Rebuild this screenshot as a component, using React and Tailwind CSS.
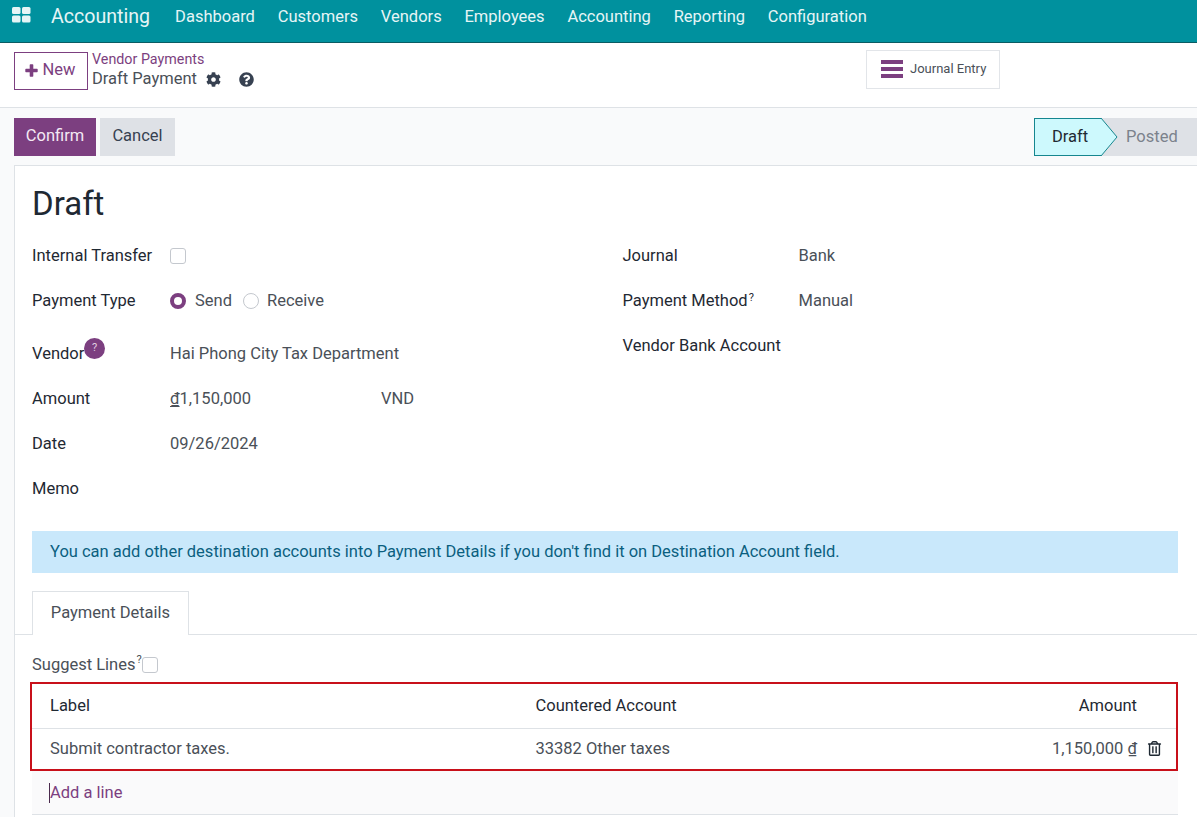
import { FaCog, FaQuestionCircle, FaRegTrashAlt } from 'react-icons/fa';

const navItems = ['Dashboard', 'Customers', 'Vendors', 'Employees', 'Accounting', 'Reporting', 'Configuration'];

const GridIcon = () => (
  <svg width="19" height="16" viewBox="0 0 19 16" className="shrink-0">
    <rect x="0" y="0" width="8.5" height="7" rx="1.5" fill="#e6f5f6" />
    <rect x="10" y="0" width="8.5" height="7" rx="1.5" fill="#e6f5f6" />
    <rect x="0" y="8.5" width="8.5" height="7" rx="1.5" fill="#e6f5f6" />
    <rect x="10" y="8.5" width="8.5" height="7" rx="1.5" fill="#e6f5f6" />
  </svg>
);

const Checkbox = () => <span className="block w-4 h-4 rounded-[3px] border border-[#c4c8ce] bg-white" />;

const Dong = () => <span className="underline underline-offset-2">₫</span>;

const FieldRow = ({ label, children, className = 'h-[45px]' }) => (
  <div className={`flex items-center ${className}`}>
    <div className="w-[138px] shrink-0 pt-[2px] text-[#1f2933] whitespace-nowrap">{label}</div>
    <div className="flex items-center pt-[2px] text-[#4a5058]">{children}</div>
  </div>
);

const RightRow = ({ label, children }) => (
  <div className="flex items-center h-[45px] pt-[2px]">
    <div className="w-[176px] shrink-0 text-[#1f2933] whitespace-nowrap">{label}</div>
    <div className="text-[#4a5058]">{children}</div>
  </div>
);

export default function App() {
  return (
    <div className="h-[817px] overflow-hidden bg-[#f9fafb] text-[16.5px] font-['Roboto',sans-serif]">
      {/* Top nav */}
      <div className="flex items-start h-[43px] bg-[#00919e] border-b border-[#0a5c63] text-[#e6f5f6]">
        <div className="ml-3 mt-[7px]"><GridIcon /></div>
        <div className="ml-[20px] mt-[3px] text-[19.6px] leading-7">Accounting</div>
        <div className="flex ml-[25px] gap-[22.8px] mt-[5px] leading-6">
          {navItems.map(item => (
            <span key={item}>{item}</span>
          ))}
        </div>
      </div>

      {/* Control panel */}
      <div className="relative flex h-[65px] bg-white border-b border-[#dee2e6] pl-[14px] pt-[9px]">
        <button className="flex items-center justify-center w-[74px] h-[38px] pb-[2px] border border-[#7c3f80] text-[#7c3f80]">
          <svg width="13" height="13" viewBox="0 0 13 13" className="mr-[5px] -ml-[2px]">
            <path d="M4.7 1a.7.7 0 0 1 .7-.7h2.2a.7.7 0 0 1 .7.7v3.7H12a.7.7 0 0 1 .7.7v2.2a.7.7 0 0 1-.7.7H8.300v3.700a.7.7 0 0 1-.7.7H5.400a.7.7 0 0 1-.7-.7V8.300H1a.7.7 0 0 1-.7-.7V5.400a.7.7 0 0 1 .7-.7h3.700z" fill="#7c3f80" />
          </svg>
          New
        </button>
        <div className="ml-[4px]">
          <div className="text-[14.3px] leading-[16px] -mt-px text-[#7c3f80]">Vendor Payments</div>
          <div className="flex items-center mt-[1px] leading-[22px] text-[#4a5058]">
            Draft Payment
            <FaCog size={15} className="ml-[9px] text-[#374151]" />
            <FaQuestionCircle size={15} className="ml-[18px] text-[#374151]" />
          </div>
        </div>
        <div className="absolute left-[866px] top-[7px] flex items-center w-[134px] h-[39px] pb-[1px] border border-[#e2e5e9] pl-[14px] text-[13px] text-[#4a5058]">
          <div className="flex flex-col gap-[3px] w-[22px] mr-[7px]">
            <span className="block h-[4px] bg-[#7c3f80]" />
            <span className="block h-[4px] bg-[#7c3f80]" />
            <span className="block h-[4px] bg-[#7c3f80]" />
          </div>
          Journal Entry
        </div>
      </div>

      {/* Action bar */}
      <div className="flex justify-between h-[57px] pl-[14px] pt-[10px]">
        <div className="flex gap-1">
          <button className="w-[82px] h-[38px] pb-[2px] bg-[#7c3f80] text-[#f3e9f4]">Confirm</button>
          <button className="w-[75px] h-[38px] pb-[2px] bg-[#dee1e6] text-[#374151]">Cancel</button>
        </div>
        <div className="flex h-[38px]">
          <div className="relative flex items-center w-[67px] pl-[17px] bg-[#cdf9fd] border border-r-0 border-[#15868f] text-[#1f2933]">
            Draft
            <svg width="17" height="38" viewBox="0 0 17 38" className="absolute left-[66px] -top-px z-10">
              <path d="M0 0 L16 19 L0 38 Z" fill="#cdf9fd" />
              <path d="M0 0 L16 19 L0 38" fill="none" stroke="#15868f" />
            </svg>
          </div>
          <div className="flex items-center w-[96px] pl-[25px] bg-[#dee1e6] text-[#7b828c]">Posted</div>
        </div>
      </div>

      {/* Form card */}
      <div className="ml-[14px] h-[660px] bg-white border border-r-0 border-[#dee2e6]">
        <div className="pl-[17px] pr-[19px]">
          <h1 className="mt-[17px] h-[41px] text-[33px] leading-[42px] text-[#1f2933]">Draft</h1>

          <div className="flex mt-[9px]">
            <div className="w-[590.5px]">
              <FieldRow label="Internal Transfer"><span className="-mt-[2px]"><Checkbox /></span></FieldRow>
              <FieldRow label="Payment Type">
                <span className="block -mt-[2px] w-4 h-4 rounded-full border-[4.5px] border-[#7c3f80] bg-white" />
                <span className="ml-[9px]">Send</span>
                <span className="block -mt-[2px] ml-[11px] w-4 h-4 rounded-full border border-[#c4c8ce]" />
                <span className="ml-2">Receive</span>
              </FieldRow>
              <FieldRow
                className="h-[61px]"
                label={
                  <span className="relative">
                    Vendor
                    <span className="absolute left-[52px] -top-[6px] flex items-center justify-center w-[21px] h-[21px] rounded-full bg-[#7c3f80] text-[11px] text-[#e0cfe1]">?</span>
                  </span>
                }
              >
                Hai Phong City Tax Department
              </FieldRow>
              <FieldRow label="Amount" className="h-[29px]">
                <span className="w-[211px]"><Dong />1,150,000</span>
                VND
              </FieldRow>
              <FieldRow label="Date" className="h-[61px]">09/26/2024</FieldRow>
              <FieldRow label="Memo" className="h-[29px]" />
            </div>
            <div>
              <RightRow label="Journal">Bank</RightRow>
              <RightRow label={<>Payment Method<sup className="text-[11px] ml-px">?</sup></>}>Manual</RightRow>
              <RightRow label="Vendor Bank Account" />
            </div>
          </div>

          <div className="flex items-center h-[42px] mt-[28px] pl-[18px] bg-[#c9e8fb] text-[#0b5f7f]">
            You can add other destination accounts into Payment Details if you don't find it on Destination Account field.
          </div>
        </div>

        {/* Tabs */}
        <div className="flex h-[44px] mt-[18px] pl-[17px] border-b border-[#dee2e6]">
          <div className="flex items-center justify-center w-[157px] h-[44px] border border-b-0 border-[#dee2e6] bg-white text-[#4a5058]">
            Payment Details
          </div>
        </div>

        <div className="pl-[17px] pr-[19px]">
          <div className="flex items-center h-[47px] pt-[13px] text-[#4a5058]">
            Suggest Lines<sup className="text-[11px] ml-px">?</sup>
            <Checkbox />
          </div>

          {/* Lines table */}
          <div className="-ml-[2px] h-[89px] border-2 border-[#c8101a] text-[#4a5058]">
            <div className="flex items-center h-[45px] border-b border-[#dee2e6] text-[#1f2933]">
              <div className="w-[503.5px] pl-[18px]">Label</div>
              <div className="flex-1">Countered Account</div>
              <div className="pr-[39px]">Amount</div>
            </div>
            <div className="relative flex items-center h-[40px]">
              <div className="w-[503.5px] pl-[18px]">Submit contractor taxes.</div>
              <div className="flex-1">33382 Other taxes</div>
              <div className="pr-[39px]">1,150,000 <Dong /></div>
              <FaRegTrashAlt size={15} className="absolute right-[14px] top-[12px] text-[#1f2933]" />
            </div>
          </div>

          <div className="flex items-center h-[44px] bg-[#fafafb] border-b border-[#dee2e6] pl-[18px] text-[#7c3f80]">
            <span className="-ml-px border-l border-[#4a2a4d] leading-5">Add a line</span>
          </div>
        </div>
      </div>
    </div>
  );
}
